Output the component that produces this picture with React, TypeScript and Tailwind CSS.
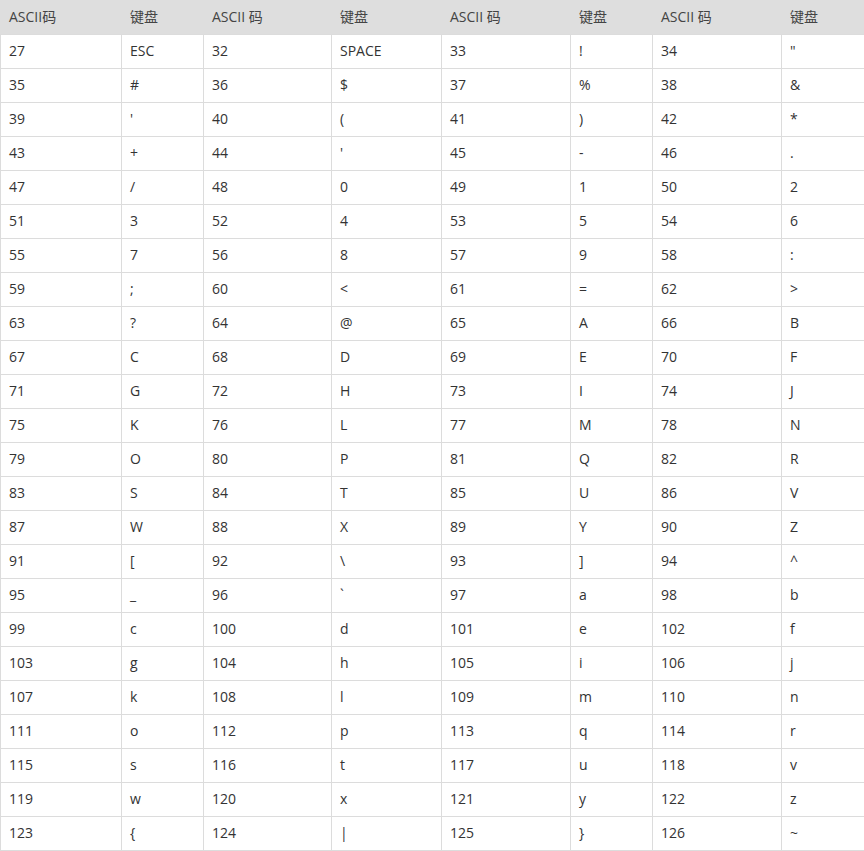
const widths = "grid-cols-[121px_82px_128px_110px_129px_82px_129px_83px]";

const headers = ["ASCII码", "键盘", "ASCII 码", "键盘", "ASCII 码", "键盘", "ASCII 码", "键盘"];

function keyFor(code: number) {
  if (code === 27) return "ESC";
  if (code === 32) return "SPACE";
  if (code === 44) return "'";
  return String.fromCharCode(code);
}

const codes = [27, 32, 33, 34];
for (let c = 35; c <= 126; c++) codes.push(c);

const rows: number[][] = [];
for (let i = 0; i < codes.length; i += 4) rows.push(codes.slice(i, i + 4));

export default function App() {
  return (
    <div
      className="w-[864px] bg-white text-[14px] text-[#333]"
      style={{ fontFamily: '"Open Sans", "Noto Sans CJK SC", sans-serif' }}
    >
      <div className={`grid ${widths} h-[35px] border-b border-[#dcdcdc] bg-[#dedede] text-[#444]`}>
        {headers.map((h, i) => (
          <div key={i} className="flex items-center px-[9px] pb-0.5">
            {h}
          </div>
        ))}
      </div>
      {rows.map((row, r) => (
        <div key={r} className={`grid ${widths} h-[34px] border-b border-[#dcdcdc]`}>
          {row.flatMap((code) => [
            <div key={code + "c"} className="flex items-center border-l border-[#dcdcdc] px-2 pb-0.5">
              {code}
            </div>,
            <div key={code + "k"} className="flex items-center border-l border-[#dcdcdc] px-2 pb-0.5">
              {keyFor(code)}
            </div>,
          ])}
        </div>
      ))}
    </div>
  );
}
